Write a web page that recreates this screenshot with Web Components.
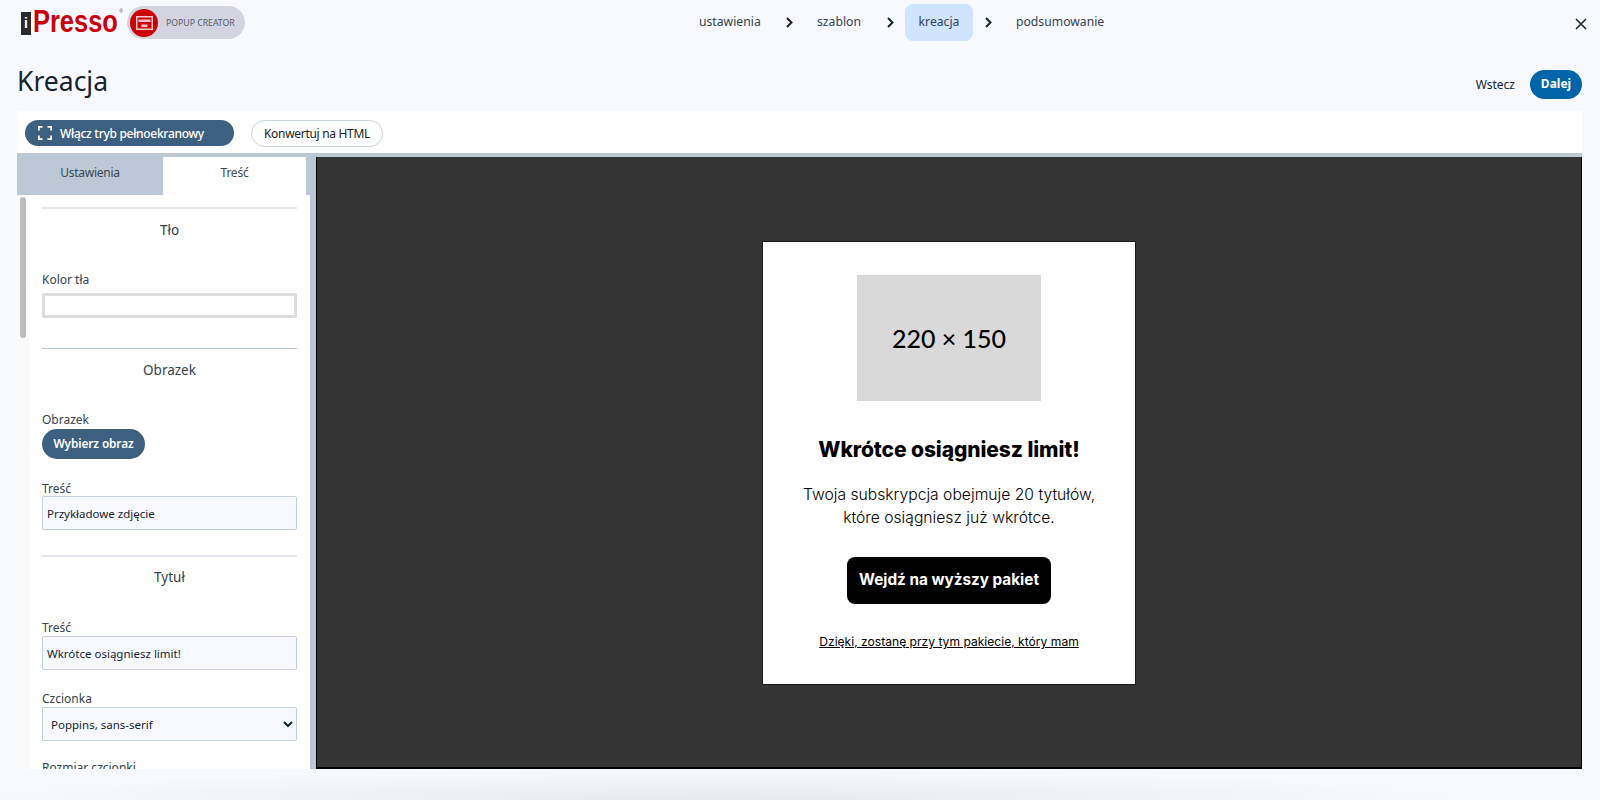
<!DOCTYPE html>
<html lang="pl">
<head>
<meta charset="utf-8">
<title>Kreacja</title>
<style>
  html, body { margin: 0; height: 800px; overflow: hidden; background: #f8f9ff; }
  body { font-family: "Noto Sans", sans-serif; color: #14242f; display: flex; flex-direction: column; }
</style>
</head>
<body>
<app-header></app-header>
<page-title heading="Kreacja"></page-title>
<creator-toolbar></creator-toolbar>
<creator-editor>
  <editor-form slot="form"></editor-form>
  <popup-preview slot="preview"></popup-preview>
</creator-editor>
<page-foot></page-foot>

<script>
const UI_FONT = `"Noto Sans", sans-serif`;
const POP_FONT = `Inter, "Noto Sans", sans-serif`;

class AppHeader extends HTMLElement {
  constructor() {
    super();
    this.attachShadow({ mode: "open" });
  }

  connectedCallback() {
    const chevron = `<svg width="9" height="11" viewBox="0 0 9 11" fill="none"><path d="M2 1l4.5 4.5L2 10" stroke="#14242f" stroke-width="2"/></svg>`;
    this.shadowRoot.innerHTML = `
      <style>
        :host { display: flex; height: 45px; flex: none; position: relative; font-family: ${UI_FONT}; }
        .brand { display: flex; align-items: flex-start; padding: 6px 0 0 21px; width: 660px; box-sizing: border-box; }
        .logo { display: flex; align-items: flex-start; height: 33px; width: 106px; flex: none; position: relative; }
        .logo i {
          display: block; width: 10px; height: 23px; margin: 6px 2px 0 0; background: #2b2b2b; color: #fff;
          font: bold 14px/23px "Liberation Sans", sans-serif; text-align: center; flex: none;
        }
        .logo b {
          display: block; width: 85px; flex: none; font: bold 32px/30px "Liberation Sans", sans-serif; color: #c8000a;
          transform: scaleX(.795); transform-origin: left center;
        }
        .logo sup { position: absolute; left: 98px; top: 2px; font-size: 5px; line-height: 6px; color: #777; }
        .pill {
          display: flex; align-items: center; gap: 8px; width: 118px; height: 33px; box-sizing: border-box;
          padding-left: 3px; border-radius: 17px; background: #d4d4e1; font-size: 8.7px; color: #555a66;
        }
        .dot { width: 28px; height: 28px; border-radius: 50%; background: #cc0008; display: flex; align-items: center; justify-content: center; flex: none; }
        nav { display: flex; align-items: flex-start; font-size: 12.2px; color: #33434f; }
        nav a { display: block; height: 37px; line-height: 35px; margin-top: 4px; box-sizing: border-box; }
        nav svg { margin-top: 17px; display: block; flex: none; }
        .on { background: #cfe4fe; border-radius: 8px; }
        .close { position: absolute; left: 1575px; top: 18px; }
      </style>
      <div class="brand">
        <div class="logo"><i>i</i><b>Presso</b><sup>®</sup></div>
        <div class="pill">
          <span class="dot">
            <svg width="17" height="14" viewBox="0 0 17 14" fill="none"><rect x=".75" y=".75" width="15.5" height="12.5" stroke="#f4c6c8" stroke-width="1.5"/><rect x="2.5" y="3.5" width="12" height="2.5" fill="#f4c6c8"/><rect x="5.5" y="8.5" width="6" height="2.5" fill="#f4c6c8"/></svg>
          </span>
          POPUP CREATOR
        </div>
      </div>
      <nav>
        <a style="margin-left:39px;width:86px">ustawienia</a>${chevron}
        <a style="margin-left:23px;width:69px">szablon</a>${chevron}
        <a class="on" style="margin-left:10px;width:68px;text-align:center">kreacja</a><span style="width:11px"></span>${chevron}
        <a style="margin-left:23px">podsumowanie</a>
      </nav>
      <svg class="close" width="12" height="12" viewBox="0 0 12 12" fill="none"><path d="M1 1l10 10M11 1L1 11" stroke="#14242f" stroke-width="1.5"/></svg>
    `;
  }
}

class PageTitle extends HTMLElement {
  constructor() {
    super();
    this.attachShadow({ mode: "open" });
  }

  connectedCallback() {
    this.shadowRoot.innerHTML = `
      <style>
        :host { display: flex; align-items: center; justify-content: space-between; height: 66px; flex: none; padding: 0 18px 0 17px; box-sizing: border-box; font-family: ${UI_FONT}; }
        h1 { margin: 6px 0 0; font-size: 26.5px; font-weight: 400; color: #14242f; }
        .actions { display: flex; align-items: center; gap: 15px; margin-top: 12px; font-size: 12px; }
        .next { background: #0064a8; color: #fff; font-weight: 700; height: 29px; width: 52px; line-height: 28px; text-align: center; border-radius: 15px; }
      </style>
      <h1>${this.getAttribute("heading")}</h1>
      <div class="actions"><span>Wstecz</span><span class="next">Dalej</span></div>
    `;
  }
}

class CreatorToolbar extends HTMLElement {
  constructor() {
    super();
    this.attachShadow({ mode: "open" });
  }

  connectedCallback() {
    this.shadowRoot.innerHTML = `
      <style>
        :host { display: flex; align-items: center; gap: 17px; height: 42px; flex: none; margin: 0 18px 0 17px; padding: 2px 0 0 8px; box-sizing: border-box; background: #fff; font-family: ${UI_FONT}; font-size: 12px; letter-spacing: -.3px; }
        .full { display: flex; align-items: center; gap: 8px; width: 209px; height: 26px; box-sizing: border-box; padding-left: 13px; border-radius: 13px; background: #3e6080; color: #fff; font-weight: 500; }
        .html { display: flex; align-items: center; justify-content: center; width: 132px; height: 27px; box-sizing: border-box; border: 1px solid #c9d3de; border-radius: 14px; color: #222; }
      </style>
      <span class="full">
        <svg width="14" height="14" viewBox="0 0 14 14" fill="none" stroke="#fff" stroke-width="1.7"><path d="M.9 4.5V.9h3.6M9.5.9h3.6v3.6M13.1 9.5v3.6H9.5M4.5 13.1H.9V9.5"/></svg>
        Włącz tryb pełnoekranowy
      </span>
      <span class="html">Konwertuj na HTML</span>
    `;
  }
}

class CreatorEditor extends HTMLElement {
  constructor() {
    super();
    this.attachShadow({ mode: "open" });
  }

  connectedCallback() {
    this.shadowRoot.innerHTML = `
      <style>
        :host { display: grid; grid-template-columns: 299px 1fr; height: 616px; flex: none; margin: 0 18px 0 17px; padding-top: 4px; box-sizing: border-box; background: #bcc8d6; font-family: ${UI_FONT}; }
        .left { display: flex; flex-direction: column; min-height: 0; }
        .tabs { display: grid; grid-template-columns: 146px 143px; height: 38px; flex: none; font-size: 12px; letter-spacing: -.25px; color: #3a4954; }
        .tabs span { display: flex; align-items: center; justify-content: center; padding-bottom: 8px; box-sizing: border-box; }
        .tabs .on { background: #fff; }
        .body { display: flex; width: 293px; flex: 1; min-height: 0; background: #fff; overflow: hidden; }
        .track { width: 12px; flex: none; background: #fafafa; padding: 2px 3px; box-sizing: border-box; }
        .thumb { height: 141px; border-radius: 4px; background: #bdbdbd; }
        ::slotted([slot="form"]) { flex: 1; }
      </style>
      <div class="left">
        <div class="tabs"><span>Ustawienia</span><span class="on">Treść</span></div>
        <div class="body">
          <div class="track"><div class="thumb"></div></div>
          <slot name="form"></slot>
        </div>
      </div>
      <slot name="preview"></slot>
    `;
  }
}

class FormSection extends HTMLElement {
  constructor() {
    super();
    this.attachShadow({ mode: "open" });
  }

  connectedCallback() {
    const thin = this.hasAttribute("thin");
    const headHeight = this.getAttribute("head") || 42;
    this.shadowRoot.innerHTML = `
      <style>
        :host { display: block; }
        hr { margin: 0; border: 0; height: ${thin ? 1 : 2}px; background: ${thin ? "#bcc8d6" : "#e4e9f0"}; }
        h3 { margin: 0; height: ${headHeight}px; line-height: ${headHeight}px; text-align: center; font-size: 13.5px; font-weight: 400; color: #33434f; }
        .fields { display: flex; flex-direction: column; }
      </style>
      <hr>
      <h3>${this.getAttribute("heading")}</h3>
      <div class="fields"><slot></slot></div>
    `;
  }
}

class FormField extends HTMLElement {
  constructor() {
    super();
    this.attachShadow({ mode: "open" });
  }

  connectedCallback() {
    const gap = this.getAttribute("gap") || 0;
    this.shadowRoot.innerHTML = `
      <style>
        :host { display: block; }
        label { display: block; height: 16px; line-height: 16px; margin-bottom: ${gap}px; font-size: 12px; color: #33434f; }
      </style>
      <label>${this.getAttribute("label")}</label>
      <slot></slot>
    `;
  }
}

class TextControl extends HTMLElement {
  constructor() {
    super();
    this.attachShadow({ mode: "open" });
  }

  connectedCallback() {
    const value = this.getAttribute("value");
    const control = this.hasAttribute("select")
      ? `<select><option>${value}</option></select>`
      : `<input type="text" value="${value}">`;
    this.shadowRoot.innerHTML = `
      <style>
        :host { display: block; }
        input, select {
          display: block; width: 100%; height: 34px; box-sizing: border-box; margin: 0; padding: 0 4px;
          border: 1px solid #c3cede; border-radius: 2px; background-color: #f8f9ff;
          font: 11.5px ${UI_FONT}; color: #14242f; outline: none;
        }
      </style>
      ${control}
    `;
  }
}

class EditorForm extends HTMLElement {
  constructor() {
    super();
    this.attachShadow({ mode: "open" });
  }

  connectedCallback() {
    this.shadowRoot.innerHTML = `
      <style>
        :host { display: block; padding: 12px 13px 0; font-family: ${UI_FONT}; overflow: hidden; }
        .swatch { height: 25px; box-sizing: border-box; border: 3px solid #dddddd; border-radius: 2px; background: #fff; }
        .pick { display: block; width: 103px; height: 30px; margin-top: 1px; line-height: 29px; text-align: center; border-radius: 15px; background: #3e6080; color: #fff; font-size: 11.8px; font-weight: 600; letter-spacing: -.1px; }
        form-field { margin-bottom: 20px; }
      </style>
      <form-section heading="Tło">
        <form-field label="Kolor tła" gap="5" style="margin-top:21px;margin-bottom:30px"><div class="swatch"></div></form-field>
      </form-section>
      <form-section heading="Obrazek" head="43" thin>
        <form-field label="Obrazek" style="margin-top:20px;margin-bottom:22px"><span class="pick">Wybierz obraz</span></form-field>
        <form-field label="Treść" gap="-1" style="margin-bottom:25px"><text-control value="Przykładowe zdjęcie"></text-control></form-field>
      </form-section>
      <form-section heading="Tytuł" head="41">
        <form-field label="Treść" style="margin-top:22px;margin-bottom:21px"><text-control value="Wkrótce osiągniesz limit!"></text-control></form-field>
        <form-field label="Czcionka" style="margin-bottom:19px"><text-control select value="Poppins, sans-serif"></text-control></form-field>
        <form-field label="Rozmiar czcionki"></form-field>
      </form-section>
    `;
  }
}

class PopupPreview extends HTMLElement {
  constructor() {
    super();
    this.attachShadow({ mode: "open" });
  }

  connectedCallback() {
    this.shadowRoot.innerHTML = `
      <style>
        :host { display: flex; align-items: center; justify-content: center; background: #353535; border: 1px solid #000; box-sizing: border-box; border-width: 0 1px 2px 1px; padding-top: 2px; font-family: ${POP_FONT}; }
        .card { width: 372px; height: 442px; box-sizing: border-box; background: #fff; box-shadow: 0 0 0 1px #1c1c1c; color: #000; display: flex; flex-direction: column; align-items: center; padding-top: 33px; text-align: center; }
        .img { width: 184px; height: 126px; flex: none; background: #d9d9d9; display: flex; align-items: center; justify-content: center; font: 500 25px Lato, sans-serif; }
        h2 { margin: 36px 0 0; font-size: 21px; line-height: 26px; font-weight: 800; letter-spacing: -.1px; white-space: nowrap; }
        p { margin: 20px 0 0; font-size: 15.7px; line-height: 23px; font-weight: 300; white-space: nowrap; }
        .cta { width: 204px; height: 47px; margin-top: 28px; line-height: 46px; border-radius: 8px; background: #000; color: #fff; font-size: 15.3px; font-weight: 700; }
        a { margin-top: 28px; font-size: 12.1px; line-height: 20px; color: #000; text-decoration: underline; white-space: nowrap; }
      </style>
      <div class="card">
        <div class="img">220 × 150</div>
        <h2>Wkrótce osiągniesz limit!</h2>
        <p>Twoja subskrypcja obejmuje 20 tytułów,<br>które osiągniesz już wkrótce.</p>
        <div class="cta">Wejdź na wyższy pakiet</div>
        <a>Dzięki, zostanę przy tym pakiecie, który mam</a>
      </div>
    `;
  }
}

class PageFoot extends HTMLElement {
  constructor() {
    super();
    this.attachShadow({ mode: "open" });
  }

  connectedCallback() {
    this.shadowRoot.innerHTML = `
      <style>
        :host { display: block; flex: 1; background: radial-gradient(ellipse 48% 100% at 45% 100%, #e9eaef 0%, #f8f9ff 100%); }
      </style>
    `;
  }
}

customElements.define("app-header", AppHeader);
customElements.define("page-title", PageTitle);
customElements.define("creator-toolbar", CreatorToolbar);
customElements.define("creator-editor", CreatorEditor);
customElements.define("form-section", FormSection);
customElements.define("form-field", FormField);
customElements.define("text-control", TextControl);
customElements.define("editor-form", EditorForm);
customElements.define("popup-preview", PopupPreview);
customElements.define("page-foot", PageFoot);
</script>
</body>
</html>
